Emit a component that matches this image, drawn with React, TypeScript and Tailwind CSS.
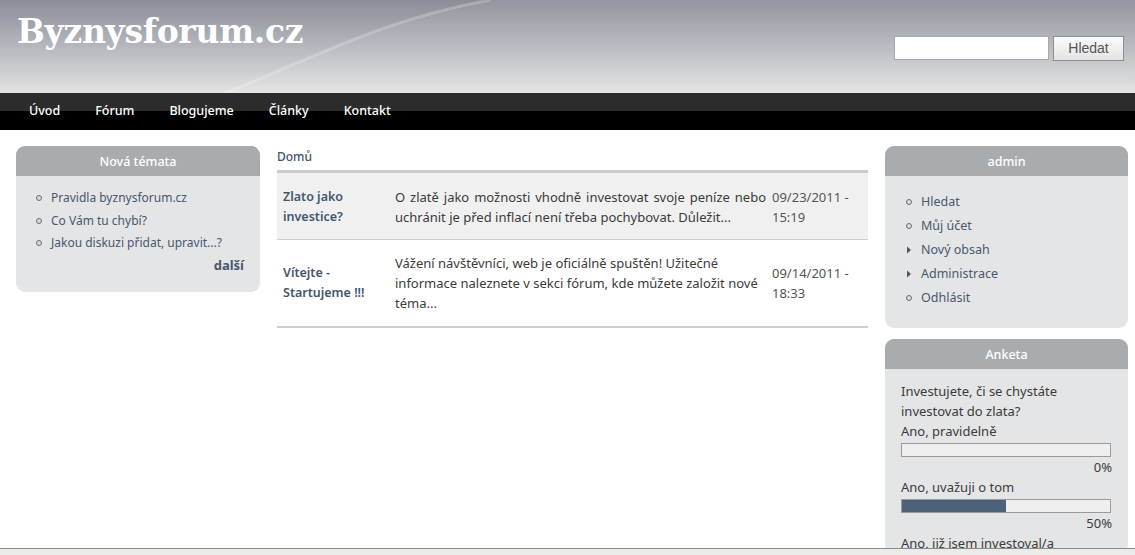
const font = "font-['Noto_Sans','DejaVu_Sans',sans-serif]";

const navItems = ["Úvod", "Fórum", "Blogujeme", "Články", "Kontakt"];

const Dot = () => (
  <span className="inline-block w-[6px] h-[6px] rounded-full border border-[#6b6f75] bg-[#d8d9db] shrink-0" />
);

const Arrow = () => (
  <svg width="6" height="8" viewBox="0 0 6 8" className="shrink-0">
    <path d="M1 0.5 L5 4 L1 7.5 Z" fill="#555" />
  </svg>
);

// boxík v postranním panelu
const Box = ({ title, children, className = "" }: { title: string; children: React.ReactNode; className?: string }) => (
  <div className={`rounded-[9px] bg-[#e4e5e7] overflow-hidden ${className}`}>
    <div className="h-[30px] pt-[2px] bg-[#a9acaf] flex items-center justify-center text-white text-[12.5px] font-medium">
      {title}
    </div>
    {children}
  </div>
);

const Bar = ({ pct }: { pct: number }) => (
  <div className="h-[14px] border border-[#9a9a9a] bg-[#efefef]">
    <div className="h-full bg-[#4d6279]" style={{ width: `${pct}%` }} />
  </div>
);

const App = () => {
  return (
    <div className={`h-[555px] flex flex-col overflow-hidden bg-white ${font}`}>
      {/* hlavička */}
      <header className="relative h-[93px] bg-gradient-to-b from-[#8b8e97] via-[#b4b7bd] to-[#e3e3e3] shrink-0">
        <svg className="absolute inset-0" width="1135" height="93" viewBox="0 0 1135 93" preserveAspectRatio="none">
          <path d="M225 93 C 310 60, 380 20, 490 0 L 1135 0 L 1135 93 Z" fill="#ffffff" fillOpacity="0.07" />
          <path d="M225 93 C 310 60, 380 20, 490 0" stroke="#ffffff" strokeOpacity="0.22" strokeWidth="3" fill="none" />
        </svg>
        <div className="relative flex justify-between pl-[17px] pr-[11px]">
          <h1 className="pt-[10px] text-white text-[33px] leading-[44px] font-bold font-['DejaVu_Serif',serif] tracking-[-0.3px]">
            Byznysforum.cz
          </h1>
          <div className="flex items-start gap-[4px] pt-[36px]">
            <input className="w-[155px] h-[24px] bg-white border border-[#a7a9ad] outline-none" />
            <button className="w-[71px] h-[25px] border border-[#8e8e8e] bg-gradient-to-b from-[#fbfbfb] to-[#e4e4e4] text-[14px] text-[#555] font-['Liberation_Sans',sans-serif]">
              Hledat
            </button>
          </div>
        </div>
      </header>

      {/* menu */}
      <nav className="h-[37px] shrink-0 bg-gradient-to-b from-[#2c2c2c] from-50% to-black to-50% flex items-center pl-[29px] gap-[35px]">
        {navItems.map((item) => (
          <a key={item} className="text-white text-[12.5px] font-medium">
            {item}
          </a>
        ))}
      </nav>

      <div className="flex-1 min-h-0 flex items-start gap-[17px] pl-[16px] pr-[7px] pt-[16px]">
        {/* levý panel */}
        <aside className="w-[244px] shrink-0">
          <Box title="Nová témata">
            <ul className="pt-[11px] pl-[20px] text-[12px] text-[#48586c]">
              {["Pravidla byznysforum.cz", "Co Vám tu chybí?", "Jakou diskuzi přidat, upravit...?"].map((t) => (
                <li key={t} className="flex items-center gap-[9px] h-[22.5px]">
                  <Dot />
                  {t}
                </li>
              ))}
            </ul>
            <div className="text-right pr-[16px] pt-[1px] pb-[17px] text-[13px] font-bold text-[#48586c]">další</div>
          </Box>
        </aside>

        {/* obsah */}
        <main className="flex-1 min-w-0">
          <div className="text-[12px] font-medium text-[#42536a] pt-[2px] pb-[4px]">Domů</div>
          <div className="border-t-[3px] border-[#cbcbcb]">
            <div className="flex items-center bg-[#f0f0f1] border-b border-[#cfcfcf] h-[67px] pt-[2px] text-[13px] leading-[20px]">
              <div className="w-[118px] shrink-0 pl-[6px] font-semibold text-[#44566e] text-[12.5px]">Zlato jako investice?</div>
              <p className="w-[371px] shrink-0 text-[#3b3b3b] text-justify">
                O zlatě jako možnosti vhodně investovat svoje peníze nebo uchránit je před inflací není třeba pochybovat. Důležit...
              </p>
              <div className="pl-[6px] text-[#555]">09/23/2011 - 15:19</div>
            </div>
            <div className="flex items-center h-[88px] border-b-2 border-[#cfcfcf] text-[13px] leading-[20px]">
              <div className="w-[118px] shrink-0 pl-[6px] font-semibold text-[#44566e] text-[12.5px]">Vítejte - Startujeme !!!</div>
              <p className="w-[371px] shrink-0 text-[#3b3b3b]">
                Vážení návštěvníci, web je oficiálně spuštěn! Užitečné informace naleznete v sekci fórum, kde můžete založit nové téma...
              </p>
              <div className="pl-[6px] text-[#555]">09/14/2011 - 18:33</div>
            </div>
          </div>
        </main>

        {/* pravý panel */}
        <aside className="w-[243px] shrink-0 flex flex-col gap-[11px]">
          <Box title="admin">
            <ul className="pt-[14px] pb-[18px] pl-[21px] text-[12.5px] text-[#48586c]">
              {[
                ["Hledat", "dot"],
                ["Můj účet", "dot"],
                ["Nový obsah", "arrow"],
                ["Administrace", "arrow"],
                ["Odhlásit", "dot"],
              ].map(([t, k]) => (
                <li key={t} className="flex items-center gap-[9px] h-[24px]">
                  {k === "dot" ? <Dot /> : <Arrow />}
                  {t}
                </li>
              ))}
            </ul>
          </Box>
          <Box title="Anketa">
            <div className="px-[16px] pt-[12px] text-[13px] leading-[20px] text-[#3b3b3b]">
              <p>Investujete, či se chystáte investovat do zlata?</p>
              <p>Ano, pravidelně</p>
              <div className="pr-[1px] mt-[2px]"><Bar pct={0} /></div>
              <p className="text-right">0%</p>
              <p>Ano, uvažuji o tom</p>
              <div className="pr-[1px] mt-[2px]"><Bar pct={50} /></div>
              <p className="text-right">50%</p>
              <p>Ano, již jsem investoval/a</p>
            </div>
          </Box>
        </aside>
      </div>

      {/* spodní lišta */}
      <div className="h-[7px] shrink-0 border-t border-[#8a8a8a] bg-[#ecebe8]" />
    </div>
  );
};

export default App;
